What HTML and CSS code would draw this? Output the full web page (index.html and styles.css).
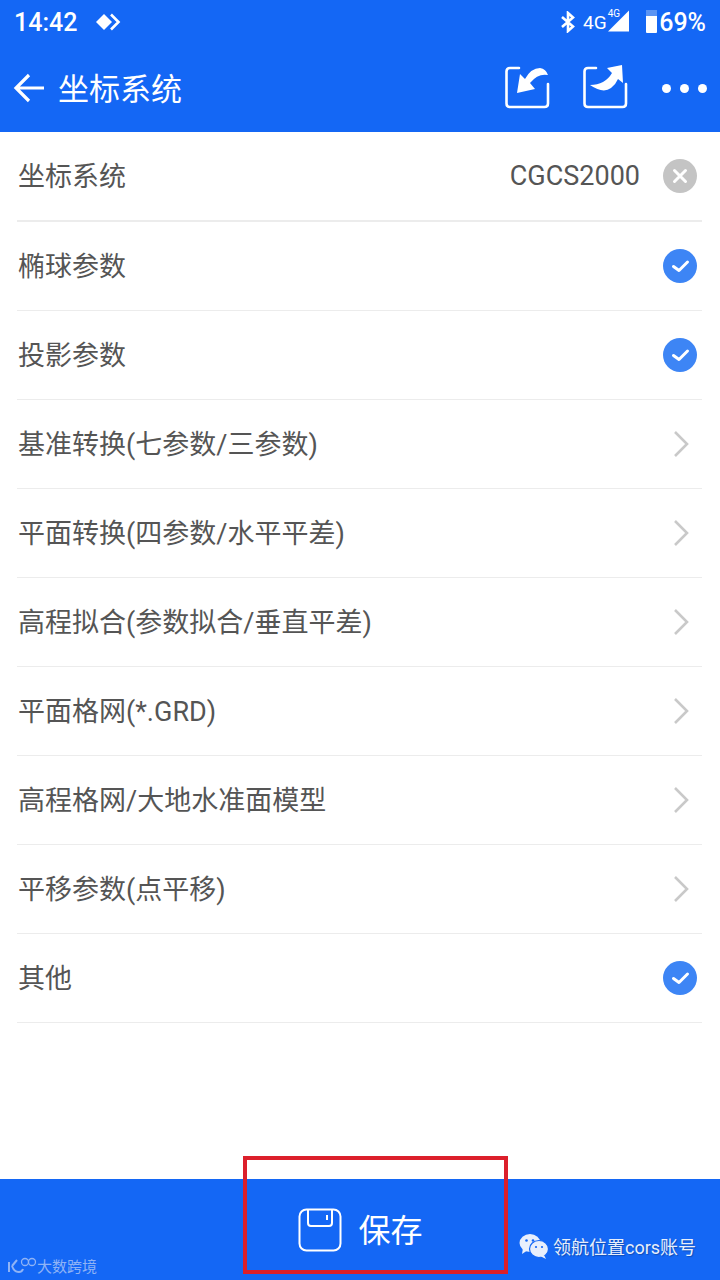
FILE: index.html
```html
<!DOCTYPE html>
<html lang="zh-CN">
<head>
  <meta charset="UTF-8" />
  <title>坐标系统</title>
  <link rel="stylesheet" href="styles.css">
</head>
<body>
  <div class="page">
    <!-- Top blue area: status bar + title bar -->
    <header class="top">
      <div class="status-bar">
        <div class="status-left">
          <span class="time">14:42</span>
          <svg class="status-diamonds" width="26" height="18" viewBox="0 0 26 18">
            <path d="M0 9 L8 1 L16 9 L8 17 Z" fill="#fff"/>
            <path d="M15 1.500 L22.500 9 L15 16.500" fill="none" stroke="#fff" stroke-width="2.600"/>
          </svg>
        </div>
        <div class="status-right">
          <svg class="bt" width="14" height="22" viewBox="0 0 14 22">
            <path d="M1 6 L12 15.500 L7 20 V2 L12 6.500 L1 16" fill="none" stroke="#fff" stroke-width="2.600"/>
          </svg>
          <span class="net">4G</span>
          <span class="net-small">4G</span>
          <svg class="signal" width="22" height="22" viewBox="0 0 22 22">
            <path d="M0 21.500 L21 0.500 V21.500 Z" fill="#fff"/>
          </svg>
          <div class="battery"><div class="battery-cap"></div></div>
          <span class="percent">69%</span>
        </div>
      </div>
      <div class="title-bar">
        <svg class="back" width="34" height="32" viewBox="0 0 34 32">
          <path d="M31 16 H4 M16 3 L3 16 L16 29" fill="none" stroke="#fff" stroke-width="3.200"/>
        </svg>
        <h1 class="title">坐标系统</h1>
        <div class="actions">
          <svg width="46" height="46" viewBox="0 0 46 46">
            <path d="M15 3 H6 Q2.500 3 2.500 6.500 V38.500 Q2.500 42 6 42 H40.500 Q44 42 44 38.500 V19" fill="none" stroke="#fff" stroke-width="2.600" stroke-linecap="round"/>
            <path d="M16 9 L21 14 Q27 3 36 3 Q42 4 44 10 Q34 8 26 18 L31 24 L13 28 Z" fill="#fff"/>
          </svg>
          <svg width="46" height="46" viewBox="0 0 46 46">
            <path d="M13 3 H5 Q1.500 3 1.500 6.500 V38.500 Q1.500 42 5 42 H39.500 Q43 42 43 38.500 V19" fill="none" stroke="#fff" stroke-width="2.600" stroke-linecap="round"/>
            <path d="M39 0 L24 3 L29 8 Q22 20 7 20 Q20 29 28 23 Q33 19 35 14 L40 18 Z" fill="#fff"/>
          </svg>
          <div class="dots"><span></span><span></span><span></span></div>
        </div>
      </div>
    </header>

    <!-- Settings list -->
    <main class="list">
      <div class="row">
        <span class="label">坐标系统</span>
        <span class="value">CGCS2000</span>
        <svg class="icon-round" width="34" height="34" viewBox="0 0 34 34">
          <circle cx="17" cy="17" r="17" fill="#c4c4c4"/>
          <path d="M11.500 11.500 L22.500 22.500 M22.500 11.500 L11.500 22.500" stroke="#fff" stroke-width="3" stroke-linecap="round"/>
        </svg>
      </div>
      <div class="row">
        <span class="label">椭球参数</span>
        <svg class="icon-round" width="34" height="34" viewBox="0 0 34 34">
          <circle cx="17" cy="17" r="17" fill="#3d85f5"/>
          <path d="M10.500 17.500 L16 21.500 L24.500 13" fill="none" stroke="#fff" stroke-width="3" stroke-linecap="round" stroke-linejoin="round"/>
        </svg>
      </div>
      <div class="row">
        <span class="label">投影参数</span>
        <svg class="icon-round" width="34" height="34" viewBox="0 0 34 34">
          <circle cx="17" cy="17" r="17" fill="#3d85f5"/>
          <path d="M10.500 17.500 L16 21.500 L24.500 13" fill="none" stroke="#fff" stroke-width="3" stroke-linecap="round" stroke-linejoin="round"/>
        </svg>
      </div>
      <div class="row">
        <span class="label">基准转换(七参数/三参数)</span>
        <svg class="chevron" width="16" height="26" viewBox="0 0 16 26"><path d="M2 1 L14 13 L2 25" fill="none" stroke="#c9c9c9" stroke-width="2.600"/></svg>
      </div>
      <div class="row">
        <span class="label">平面转换(四参数/水平平差)</span>
        <svg class="chevron" width="16" height="26" viewBox="0 0 16 26"><path d="M2 1 L14 13 L2 25" fill="none" stroke="#c9c9c9" stroke-width="2.600"/></svg>
      </div>
      <div class="row">
        <span class="label">高程拟合(参数拟合/垂直平差)</span>
        <svg class="chevron" width="16" height="26" viewBox="0 0 16 26"><path d="M2 1 L14 13 L2 25" fill="none" stroke="#c9c9c9" stroke-width="2.600"/></svg>
      </div>
      <div class="row">
        <span class="label">平面格网(*.GRD)</span>
        <svg class="chevron" width="16" height="26" viewBox="0 0 16 26"><path d="M2 1 L14 13 L2 25" fill="none" stroke="#c9c9c9" stroke-width="2.600"/></svg>
      </div>
      <div class="row">
        <span class="label">高程格网/大地水准面模型</span>
        <svg class="chevron" width="16" height="26" viewBox="0 0 16 26"><path d="M2 1 L14 13 L2 25" fill="none" stroke="#c9c9c9" stroke-width="2.600"/></svg>
      </div>
      <div class="row">
        <span class="label">平移参数(点平移)</span>
        <svg class="chevron" width="16" height="26" viewBox="0 0 16 26"><path d="M2 1 L14 13 L2 25" fill="none" stroke="#c9c9c9" stroke-width="2.600"/></svg>
      </div>
      <div class="row">
        <span class="label">其他</span>
        <svg class="icon-round" width="34" height="34" viewBox="0 0 34 34">
          <circle cx="17" cy="17" r="17" fill="#3d85f5"/>
          <path d="M10.500 17.500 L16 21.500 L24.500 13" fill="none" stroke="#fff" stroke-width="3" stroke-linecap="round" stroke-linejoin="round"/>
        </svg>
      </div>
    </main>

    <!-- Bottom save bar -->
    <footer class="bottom">
      <div class="save">
        <svg width="44" height="44" viewBox="0 0 44 44">
          <rect x="1.500" y="1.500" width="41" height="41" rx="7" fill="none" stroke="#fff" stroke-width="2"/>
          <path d="M10 2 V15 Q10 18 13 18 H31 Q34 18 34 15 V2" fill="none" stroke="#fff" stroke-width="2"/>
          <path d="M29 7 V12" stroke="#fff" stroke-width="2"/>
        </svg>
        <span class="save-text">保存</span>
      </div>
    </footer>

    <!-- Things drawn over the screenshot -->
    <div class="red-box"></div>
    <div class="mark-left">
      <svg width="30" height="18" viewBox="0 0 30 18">
        <path d="M2 5 V15 M5 9 L10 3 M5 9 Q7 15 12 15 Q15 15 16 12" fill="none" stroke="#8fb3f5" stroke-width="2"/>
        <circle cx="18" cy="5" r="3.500" fill="none" stroke="#8fb3f5" stroke-width="1.300"/>
        <circle cx="25" cy="5" r="3.500" fill="none" stroke="#8fb3f5" stroke-width="1.300"/>
      </svg>
      <span>大数跨境</span>
    </div>
    <div class="mark-right">
      <svg width="30" height="26" viewBox="0 0 30 26">
        <ellipse cx="11" cy="10" rx="10.500" ry="9" fill="#e8effc"/>
        <path d="M4 15 L3 21 L9 17 Z" fill="#e8effc"/>
        <ellipse cx="20" cy="16" rx="9.500" ry="8.500" fill="#e8effc" stroke="#1467f5" stroke-width="1.200"/>
        <path d="M25 22 L27 26 L21 23 Z" fill="#e8effc"/>
        <circle cx="7.500" cy="7.500" r="1.300" fill="#1467f5"/>
        <circle cx="14" cy="7.500" r="1.300" fill="#1467f5"/>
        <circle cx="17" cy="14" r="1.100" fill="#1467f5"/>
        <circle cx="23" cy="14" r="1.100" fill="#1467f5"/>
      </svg>
      <span>领航位置cors账号</span>
    </div>
  </div>
</body>
</html>
```

FILE: styles.css
```css
/* Reset and base styles */
* {
  padding: 0;
  margin: 0;
  box-sizing: border-box;
}

body {
  background-color: #fff;
  font-family: Roboto, "Noto Sans CJK SC", sans-serif;
  color: #555;
}

.page {
  position: relative;
  width: 720px;
  height: 1280px;
  display: flex;
  flex-direction: column;
  overflow: hidden;
}

/* Header styles */
.top {
  height: 132px;
  background-color: #1467f5;
  color: #fff;
}

.status-bar {
  height: 44px;
  padding: 0 14px;
  display: flex;
  justify-content: space-between;
  align-items: center;
}

.status-left {
  display: flex;
  align-items: center;
  gap: 19px;
}

.time {
  font-size: 25px;
  font-weight: 500;
}

.status-right {
  align-self: stretch;
  display: flex;
  align-items: center;
}

.bt {
  margin-right: 8px;
}

.net {
  font-size: 19px;
}

.net-small {
  font-size: 10px;
  align-self: flex-start;
  margin: 8px 0 0 1px;
}

.signal {
  margin-left: -12px;
  margin-top: -2px;
}

.battery {
  width: 11px;
  height: 23px;
  margin-left: 16px;
  margin-top: -2px;
  background-color: #fff;
  border-radius: 1px;
}

.battery-cap {
  width: 11px;
  height: 6px;
  background-color: #5b94f3;
}

.percent {
  font-size: 25px;
  font-weight: 500;
  margin-left: 2px;
}

.title-bar {
  height: 88px;
  padding-left: 13px;
  display: flex;
  align-items: center;
}

.title {
  font-size: 31px;
  font-weight: 400;
  margin-left: 11px;
  margin-bottom: 4px;
}

.actions {
  margin-left: auto;
  padding-right: 13px;
  display: flex;
  align-items: center;
  gap: 33px;
}

.dots {
  display: flex;
  gap: 9px;
}

.dots span {
  width: 9px;
  height: 9px;
  border-radius: 50%;
  background-color: #fff;
}

/* List rows */
.list {
  flex: 1;
  padding: 0 18px 0 17px;
}

.row {
  height: 89px;
  padding: 0 5px 0 1px;
  display: flex;
  align-items: center;
  border-bottom: 1px solid #ececec;
}

.row:first-child {
  height: 90px;
  border-bottom: 2px solid #ececec;
}

.label {
  font-size: 27px;
  color: #555;
  margin-bottom: 4px;
}

.value {
  margin-left: auto;
  margin-right: 23px;
  font-size: 27px;
  color: #555;
  margin-bottom: 1px;
}

.icon-round {
  margin-left: auto;
}

.value + .icon-round {
  margin-left: 0;
}

.chevron {
  margin-left: auto;
  margin-right: 8px;
}

/* Bottom bar */
.bottom {
  height: 101px;
  background-color: #1467f5;
  display: flex;
  justify-content: center;
  align-items: center;
}

.save {
  display: flex;
  align-items: center;
  gap: 16px;
  margin-left: 1px;
  color: #fff;
}

.save-text {
  font-size: 32px;
  margin-bottom: 4px;
}

.red-box {
  position: absolute;
  left: 243px;
  top: 1156px;
  width: 265px;
  height: 118px;
  border: 4px solid #dc1f2b;
}

.mark-left {
  position: absolute;
  left: 7px;
  top: 1255px;
  display: flex;
  align-items: center;
  font-size: 15px;
  color: #8fb3f5;
}

.mark-right {
  position: absolute;
  left: 519px;
  top: 1233px;
  display: flex;
  align-items: center;
  gap: 4px;
  font-size: 18px;
  color: #e8effc;
  text-shadow: 1px 1px 1px rgba(0, 0, 0, 0.25);
}
```
